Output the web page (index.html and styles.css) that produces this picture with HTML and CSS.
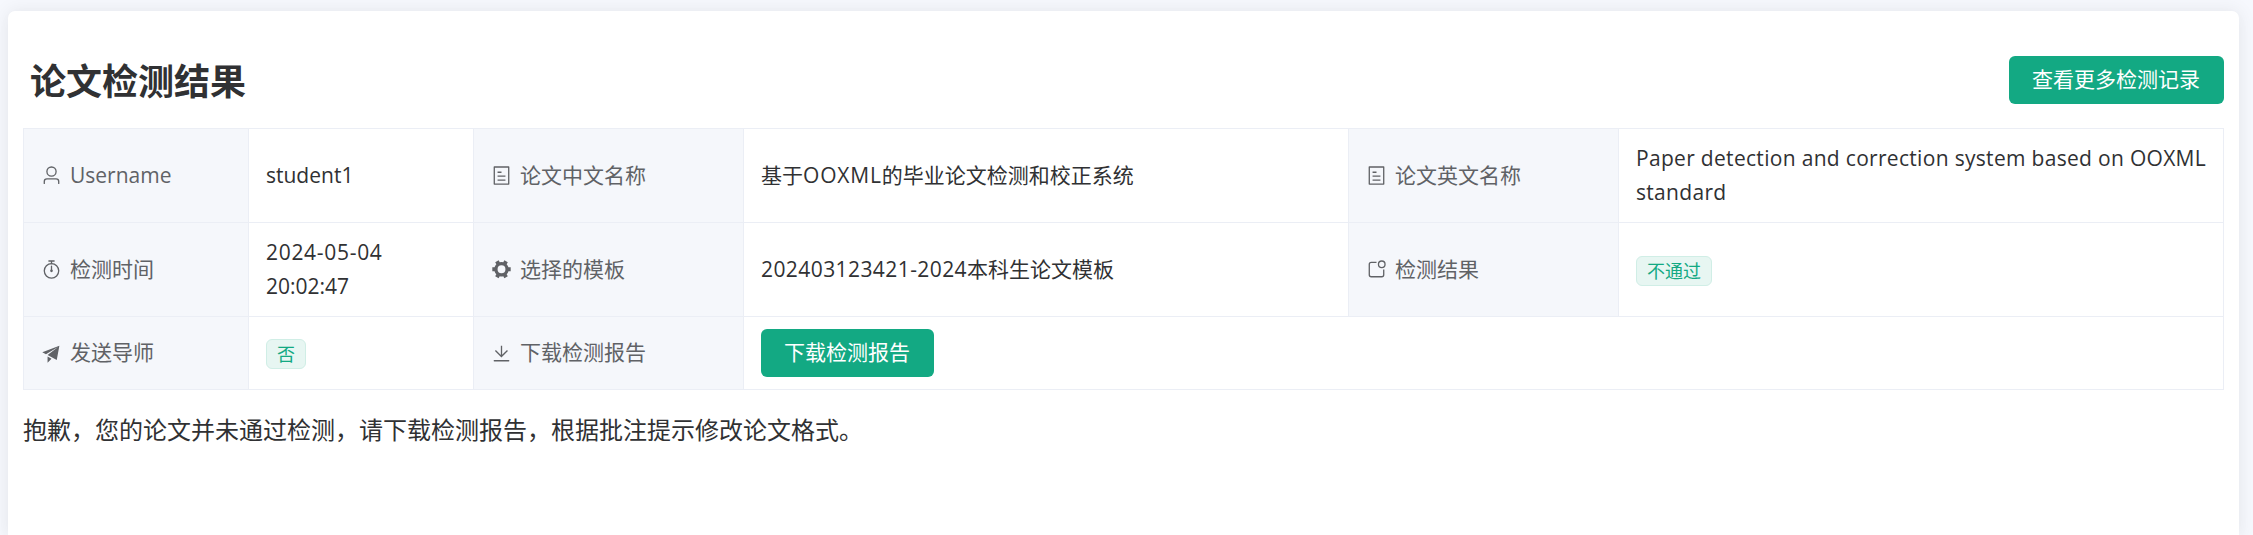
FILE: index.html
```html
<!DOCTYPE html>
<html lang="zh-CN">
<head>
<meta charset="utf-8">
<title>论文检测结果</title>
<link rel="stylesheet" href="styles.css">
</head>
<body>
<svg class="sprite" aria-hidden="true">
  <symbol id="tickets" viewBox="0 0 1024 1024"><path d="M192 128v768h640V128zm-32-64h704a32 32 0 0 1 32 32v832a32 32 0 0 1-32 32H160a32 32 0 0 1-32-32V96a32 32 0 0 1 32-32m160 448h384v64H320zm0-192h192v64H320zm0 384h384v64H320z"/></symbol>
</svg>
<main class="card">
  <header class="head">
    <h1 class="title">论文检测结果</h1>
    <button class="btn" type="button">查看更多检测记录</button>
  </header>
  <table class="desc">
    <colgroup><col class="c-a"><col class="c-a"><col class="c-b"><col class="c-c"><col class="c-b"><col class="c-c"></colgroup>
    <tr class="tall">
      <th><span class="label"><svg class="icon" viewBox="0 0 1024 1024"><path d="M512 512a192 192 0 1 0 0-384 192 192 0 0 0 0 384m0 64a256 256 0 1 1 0-512 256 256 0 0 1 0 512m320 320v-96a96 96 0 0 0-96-96H288a96 96 0 0 0-96 96v96a32 32 0 1 1-64 0v-96a160 160 0 0 1 160-160h448a160 160 0 0 1 160 160v96a32 32 0 1 1-64 0"/></svg><span>Username</span></span></th>
      <td>student1</td>
      <th><span class="label"><svg class="icon"><use href="#tickets"/></svg>论文中文名称</span></th>
      <td>基于<span class="acronym">OOXML</span>的毕业论文检测和校正系统</td>
      <th><span class="label"><svg class="icon"><use href="#tickets"/></svg>论文英文名称</span></th>
      <td><span class="latin">Paper detection and correction system based on OOXML<br>standard</span></td>
    </tr>
    <tr class="tall">
      <th><span class="label"><svg class="icon" viewBox="0 0 1024 1024"><path d="M512 896a320 320 0 1 0 0-640 320 320 0 0 0 0 640m0 64a384 384 0 1 1 0-768 384 384 0 0 1 0 768"/><path d="M512 320a32 32 0 0 1 32 32l-.512 224a32 32 0 1 1-64 0L480 352a32 32 0 0 1 32-32"/><path d="M448 576a64 64 0 1 0 128 0 64 64 0 1 0-128 0m96-448v128h-64V128h-96a32 32 0 0 1 0-64h256a32 32 0 1 1 0 64z"/></svg>检测时间</span></th>
      <td><span class="date">2024-05-04</span><br>20:02:47</td>
      <th><span class="label"><svg class="icon" viewBox="0 0 1024 1024"><path d="M764.416 254.72a351.68 351.68 0 0 1 86.336 149.184H960v192.064H850.752a351.68 351.68 0 0 1-86.336 149.312l54.72 94.72-166.272 96-54.592-94.72a352.64 352.64 0 0 1-172.48 0L371.136 936l-166.272-96 54.72-94.72a351.68 351.68 0 0 1-86.336-149.312H64v-192h109.248a351.68 351.68 0 0 1 86.336-149.312L204.8 160l166.208-96h.192l54.656 94.592a352.64 352.64 0 0 1 172.48 0L652.8 64h.128L819.2 160l-54.72 94.72zM704 499.968a192 192 0 1 0-384 0 192 192 0 0 0 384 0"/></svg>选择的模板</span></th>
      <td><span class="number">202403123421-2024</span>本科生论文模板</td>
      <th><span class="label"><svg class="icon" viewBox="0 0 1024 1024"><path d="M512 128v64H256a64 64 0 0 0-64 64v512a64 64 0 0 0 64 64h512a64 64 0 0 0 64-64V512h64v256a128 128 0 0 1-128 128H256a128 128 0 0 1-128-128V256a128 128 0 0 1 128-128z"/><path d="M768 384a128 128 0 1 0 0-256 128 128 0 0 0 0 256m0 64a192 192 0 1 1 0-384 192 192 0 0 1 0 384"/></svg>检测结果</span></th>
      <td><span class="tag">不通过</span></td>
    </tr>
    <tr class="short">
      <th><span class="label"><svg class="icon" viewBox="0 0 1024 1024"><path d="m64 448 832-320-128 704-446.08-243.328L832 192 242.816 545.472zm256 512V657.024L512 768z"/></svg>发送导师</span></th>
      <td><span class="tag">否</span></td>
      <th><span class="label"><svg class="icon" viewBox="0 0 1024 1024"><path d="M160 832h704a32 32 0 1 1 0 64H160a32 32 0 1 1 0-64m384-253.696 236.288-236.352 45.248 45.248L508.8 704 192 387.2l45.248-45.248L480 584.704V128h64z"/></svg>下载检测报告</span></th>
      <td class="action" colspan="3"><button class="btn" type="button">下载检测报告</button></td>
    </tr>
  </table>
  <p class="note">抱歉，您的论文并未通过检测，请下载检测报告，根据批注提示修改论文格式。</p>
</main>
</body>
</html>
```
FILE: styles.css
```css
* { box-sizing: border-box; }
body {
  margin: 0;
  height: 535px;
  padding: 11px 14px 0 8px;
  overflow: hidden;
  background: #f6f8fd;
  color: #303133;
  font-family: "Open Sans", "Noto Sans CJK SC", sans-serif;
  font-size: 21px;
}
.sprite { display: none; }
.card {
  height: 524px;
  padding: 45px 15px 0;
  background: #fff;
  border-radius: 7px 7px 0 0;
  box-shadow: 0 4px 18px rgba(0, 0, 0, 0.02), 0 0 18px 2px rgba(0, 0, 0, 0.06);
}
.head {
  display: flex;
  justify-content: space-between;
  align-items: flex-start;
  height: 72px;
}
.title {
  margin: 0 0 0 7px;
  font: bold 36px/46px "Noto Sans CJK SC", sans-serif;
}
.btn {
  display: block;
  height: 48px;
  margin: 0;
  padding: 0 24px 3px 23px;
  border: 0;
  border-radius: 6px;
  background: #13a983;
  color: #fff;
  font: 400 21px/45px "Noto Sans CJK SC", sans-serif;
}
.desc {
  width: 2201px;
  table-layout: fixed;
  border-collapse: collapse;
  line-height: 34px;
}
.c-a { width: 225px; }
.c-b { width: 270px; }
.c-c { width: 605px; }
.tall { height: 94px; }
.short { height: 73px; }
.desc th,
.desc td {
  padding: 0 0 2px 17px;
  border: 1px solid #ebeef5;
  text-align: left;
  vertical-align: middle;
  font-weight: 400;
  white-space: nowrap;
}
.desc .action { padding-bottom: 0; }
.desc th { background: #f5f7fb; color: #606266; }
.label {
  display: flex;
  align-items: center;
  gap: 8px;
}
.icon {
  width: 21px;
  height: 21px;
  margin-top: 2px;
  fill: currentColor;
}
.latin { letter-spacing: 0.31px; }
.acronym { letter-spacing: 0.8px; }
.date { letter-spacing: 0.7px; }
.number { letter-spacing: 0.42px; }
.tag {
  display: block;
  width: max-content;
  height: 30px;
  margin-top: 4px;
  padding: 0 10px;
  border: 1px solid #d0eee6;
  border-radius: 6px;
  background: #e7f6f2;
  color: #13a983;
  font-size: 18px;
  line-height: 28px;
}
.note {
  margin: 22px 0 0;
  font-size: 24px;
  line-height: 36px;
}
```
